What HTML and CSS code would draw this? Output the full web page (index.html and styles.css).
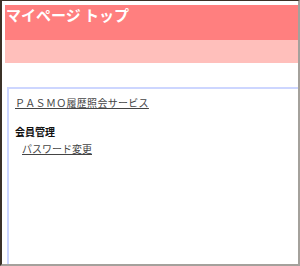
FILE: index.html
```html
<!DOCTYPE html>
<html lang="ja">
<head>
  <meta charset="UTF-8">
  <title>マイページ トップ</title>
  <link rel="stylesheet" href="styles.css">
</head>
<body>
  <div class="frame">
    <div class="page-title">マイページ トップ</div>
    <div class="sub-bar"></div>

    <div class="menu-box">
      <a class="service-link" href="#">ＰＡＳＭＯ履歴照会サービス</a>
      <div class="menu-group">
        <div class="menu-heading">会員管理</div>
        <a class="menu-link" href="#">パスワード変更</a>
      </div>
    </div>
  </div>
</body>
</html>
```

FILE: styles.css
```css
html, body {
  margin: 0;
  padding: 0;
  height: 100%;
  background: #fff;
}

body {
  font-family: "Noto Sans CJK JP", "Liberation Sans", sans-serif;
}

.frame {
  box-sizing: border-box;
  height: 266px;
  overflow: hidden;
  border-top: 1px solid #3b3127;
  border-left: 2px solid #3b3127;
  border-right: 2px solid #a4a19c;
  border-bottom: 2px solid #a4a19c;
  padding: 4px 0 0 3px;
}

.page-title {
  height: 35px;
  background-color: #ff7f7f;
  color: #fff;
  font-weight: bold;
  font-size: 15px;
  line-height: 20px;
  padding-left: 1px;
}

.sub-bar {
  height: 23px;
  background-color: #ffbfbb;
}

.menu-box {
  margin: 24px 0 0 2px;
  border-top: 2px solid #cdd6ff;
  border-left: 2px solid #cdd6ff;
  padding: 7px 0 0 6px;
  height: 300px;
  font-size: 10px;
  line-height: 14px;
}

.service-link {
  color: #444;
  letter-spacing: 0.3px;
}

.menu-group {
  margin-top: 15px;
}

.menu-heading {
  font-weight: bold;
  color: #111;
}

.menu-link {
  display: inline-block;
  margin: 3px 0 0 7px;
  color: #444;
}
```
